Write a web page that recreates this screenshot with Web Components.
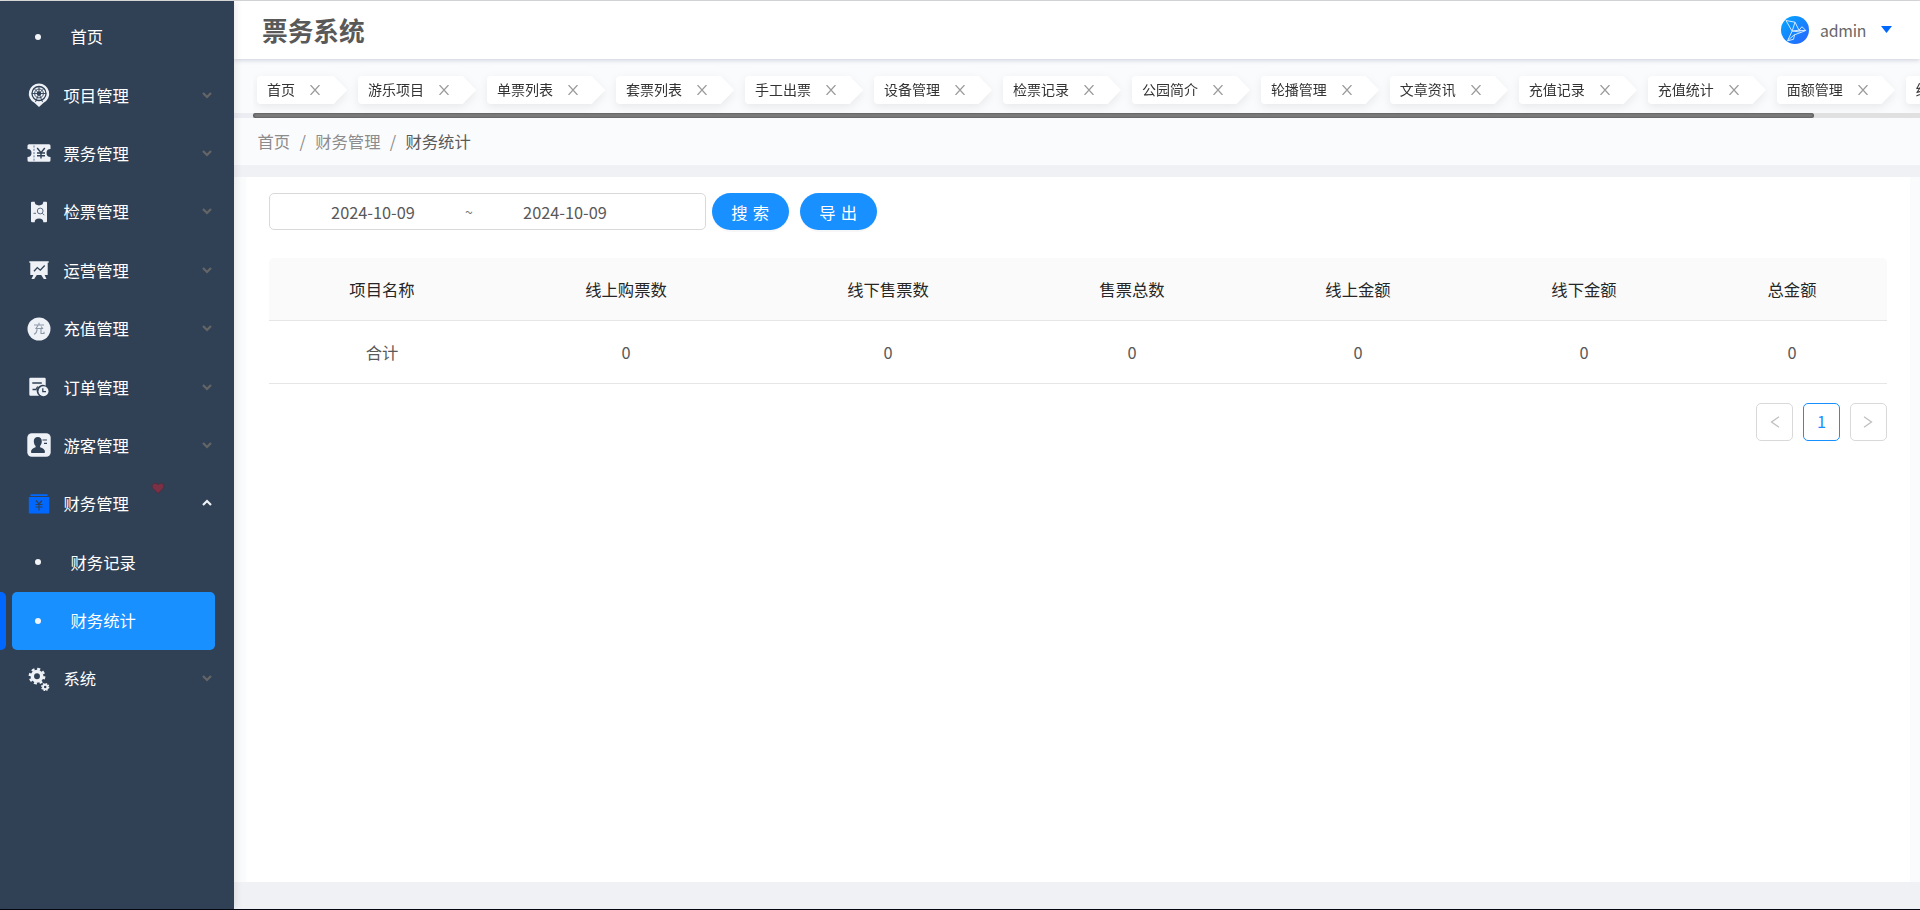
<!DOCTYPE html>
<html lang="zh-CN">
<head>
<meta charset="utf-8">
<title>票务系统</title>
<style>
    html, body {
        margin: 0;
        height: 100%;
        overflow: hidden;
    }
    body {
        font-family: "Noto Sans CJK SC", "Noto Sans", sans-serif;
        font-size: 16.33px;
        color: #595959;
    }
</style>
</head>
<body>
<ticket-app></ticket-app>

<script>
const ICONS = {
    wheel: `<path fill="#eef1f6" d="M12 .5a10.2 10.2 0 0 1 4.6 19.3L12 24l-4.600-4.200A10.200 10.200 0 0 1 12 .5z"/>
        <g fill="none" stroke="#304156" stroke-width="1.300"><circle cx="12" cy="10.500" r="7"/><circle cx="12" cy="10.500" r="4.400" stroke-width=".9"/>
        <path stroke-width=".9" d="M12 3.300v9M4.800 10.500h14.400M7 5.400l5 5.100M17 5.400l-5 5.100M12 10.500L8.500 19M12 10.500l3.500 8.500"/></g><circle cx="12" cy="10.500" r="2.300" fill="#304156"/>`,
    ticket: `<path fill="#eef1f6" d="M2 3.200h20a1.500 1.500 0 0 1 1.500 1.500V8a4 4 0 0 0 0 8v3.300a1.500 1.500 0 0 1-1.500 1.500H2a1.500 1.500 0 0 1-1.500-1.500V16a4 4 0 0 0 0-8V4.700A1.500 1.500 0 0 1 2 3.200z"/>
        <path stroke="#5d79a3" stroke-width="1" stroke-dasharray="2 1.300" d="M7 4.500v15.500"/>
        <path fill="none" stroke="#304156" stroke-width="1.400" d="M10.200 7l3.800 4.700L17.800 7M14 11.500v6M10 12h8M10 14.800h8"/>`,
    check: `<path fill="#eef1f6" d="M5 1.800h2.700a4.300 3.600 0 0 0 8.600 0H19a1 1 0 0 1 1 1v18.400a1 1 0 0 1-1 1h-2.700a4.300 3.600 0 0 0-8.600 0H5a1 1 0 0 1-1-1V2.800a1 1 0 0 1 1-1z"/>
        <g fill="none" stroke="#5c6b82" stroke-width="1"><circle cx="13.200" cy="11" r="2.900"/><path d="M15.300 13.200l2 2M6.500 13.300h2.500"/></g>`,
    board: `<path fill="#eef1f6" d="M2.300 3.300h19.400v1.500h-1V17H3.300V4.800h-1zM6.400 17h3.400l-2.600 4H4.500zM14.200 17h3.400l1.900 4h-2.700z"/>
        <path fill="none" stroke="#304156" stroke-width="1.300" d="M7 13.300l3.300-3.700 3 2.600 4.400-4.700"/>`,
    charge: `<circle cx="12" cy="12" r="11.500" fill="#eef1f6"/>
        <path fill="none" stroke="#8c98a8" stroke-width="1.100" d="M12 5.800v2M7 8h10M11 8.500l-2 3h6.500M14 9.500l2 2.300M10 12c0 3-1 4.500-3 5.200M14 12v4.500h3v-1.800"/>`,
    order: `<path fill="#eef1f6" d="M3.500 2.700h14a1.200 1.200 0 0 1 1.200 1.200v6.800a6 6 0 0 0-6.600 10H3.500a1.200 1.200 0 0 1-1.200-1.200V3.900a1.200 1.200 0 0 1 1.200-1.200z"/>
        <path fill="none" stroke="#304156" stroke-width="1.300" d="M5.300 8h9.500M10.700 11.500l-2 3.500M5.500 14.500h3.200"/>
        <circle cx="16.500" cy="16.300" r="5" fill="#eef1f6"/><path fill="none" stroke="#304156" stroke-width="1.300" d="M15.800 13.300v3.400h3.200"/>`,
    visitor: `<rect x=".3" y=".3" width="23.400" height="23.400" rx="4.500" fill="#eef1f6"/>
        <path fill="#304156" d="M10.800 4c2.700 0 4 1.700 4 4.300 0 2.400-.8 3.600-1.700 4.700v1.300c2.800 1 4.900 2 4.900 4.700 0 .7-.6 1-1.200 1H5.200c-.7 0-1.200-.3-1.200-1 0-2.700 2-3.700 4.600-4.700V13C7.700 12 6.800 10.700 6.800 8.300 6.800 5.700 8.200 4 10.800 4z"/>
        <path stroke="#304156" stroke-width="1.200" d="M15.500 7H20M17 10.300h3"/>`,
    finance: `<path fill="#0068ff" d="M3.500 2.200h17v1.700h-17zM1.800 5h20.400v15.700a.8.8 0 0 1-.8.800H2.600a.8.8 0 0 1-.8-.8z"/>
        <path fill="none" stroke="#304156" stroke-width="1.200" d="M9 8.500l3 3.500 3-3.500M12 12v6.500M8.500 12.500h7M8.500 15h7"/>`,
    gears: `<g fill="none" stroke="#eef1f6"><circle cx="10" cy="9.200" r="4.700" stroke-width="3.500"/><circle cx="10" cy="9.200" r="7.200" stroke-width="2.400" stroke-dasharray="3 2.650"/>
        <circle cx="18.200" cy="20" r="2.200" stroke-width="1.900"/><circle cx="18.200" cy="20" r="3.500" stroke-width="1.300" stroke-dasharray="1.500 1.250"/></g>`
};

function define(name, html, setup) {
    const template = document.createElement("template");
    template.innerHTML = html;
    window.customElements.define(name, class extends HTMLElement {
        constructor() {
            super();
            this.attachShadow({ mode: "open" }).appendChild(template.content.cloneNode(true));
        }
        connectedCallback() {
            if (setup) setup(this, this.shadowRoot);
        }
    });
}

// ---- sidebar ----

define("menu-item", `
    <style>
        :host {
            display: flex;
            position: relative;
            align-items: center;
            height: 58.4px;
            color: #fff;
        }
        .icon { width: 24px; height: 24px; margin: 0 12.500px 1px 27px; flex: none; }
        .icon svg { display: block; width: 24px; height: 24px; }
        .dot { width: 6px; height: 6px; border-radius: 50%; background: #f2f4f7; margin: 0 29.500px 1px 35px; flex: none; }
        .label { flex: 1; line-height: 24px; padding-bottom: 2px; }
        .arrow { width: 10px; height: 8px; margin: 0 22px 2px 0; fill: none; stroke: #656565; stroke-width: 2.200; }
        .heart { position: absolute; left: 152px; top: 7.500px; width: 12px; height: 11px; display: none; overflow: visible; }
        :host([open]) .arrow { stroke: #eef1f6; transform: scaleY(-1); }
        :host([open]) .heart { display: block; }
        :host([active])::before {
            content: "";
            position: absolute;
            left: 0; top: 0; bottom: 0;
            width: 6px;
            background: #0068ff;
            border-radius: 0 5px 5px 0;
        }
        :host([active]) .row { background: #1890ff; border-radius: 5px; margin-left: 12px; margin-right: 19px; }
        :host([active]) .dot { margin-left: 23px; }
        .row { display: flex; flex: 1; align-items: center; height: 58px; }
    </style>
    <div class="row">
        <span class="mark"></span>
        <span class="label"><slot></slot></span>
        <svg class="arrow" viewBox="0 0 10 8"><path d="M1 2l4 4 4-4"/></svg>
    </div>
    <svg class="heart" viewBox="0 0 12 11"><path fill="#7b3045" stroke="#4a2d3e" stroke-width=".8" d="M6 10.500L.9 5.500C-.9 3 .7.300 3.200.300 4.600.300 5.500 1 6 2 6.500 1 7.400.300 8.800.300c2.500 0 4.100 2.700 2.300 5.200z"/></svg>
`, (host, root) => {
    const mark = root.querySelector(".mark");
    const icon = host.getAttribute("icon");
    if (icon) {
        mark.className = "icon";
        mark.innerHTML = `<svg viewBox="0 0 24 24">${ICONS[icon]}</svg>`;
    } else {
        mark.className = "dot";
        root.querySelector(".arrow").remove();
    }
});

define("side-menu", `
    <style>
        :host {
            display: block;
            box-sizing: border-box;
            width: 234px;
            padding-top: 7px;
            background: #304156;
            box-shadow: 2px 0 7px rgba(29, 35, 41, .1);
            z-index: 2;
        }
    </style>
    <slot></slot>
`);

// ---- header ----

define("top-header", `
    <style>
        :host {
            display: flex;
            align-items: center;
            height: 58px;
            padding: 0 28px;
            background: #fff;
            box-shadow: 0 1px 5px rgba(0, 21, 71, .2);
            z-index: 1;
        }
        .title { flex: 1; font-size: 25.700px; font-weight: bold; line-height: 36px; color: #595959; }
        .avatar { width: 28px; height: 28px; margin-bottom: 1px; }
        .name { width: 46px; margin: 0 15px 0 11px; font-size: 15.800px; letter-spacing: -.2px; color: #666; }
        .caret { width: 11px; height: 8px; }
    </style>
    <span class="title"><slot></slot></span>
    <svg class="avatar" viewBox="0 0 28 28">
        <defs><linearGradient id="g" x1="0" y1="0" x2="1" y2="1"><stop offset="0" stop-color="#02aaff"/><stop offset="1" stop-color="#2962ff"/></linearGradient></defs>
        <circle cx="14" cy="14" r="14" fill="url(#g)"/>
        <path fill="none" stroke="#cfe8ff" stroke-width="1" stroke-linejoin="round" d="M5 4.500l9 1.700 4 8-7 .8zM14 6.200L11.200 15M18 14.200l3-3.500 3.800 3.800H18M11.200 15l9.300 1.200 4.300-1.700M20.500 16.200l-7.500 2.800-6.500 5.800 4.700-9.800M6.500 24.800l6-1.500 1-4.500"/>
    </svg>
    <span class="name">admin</span>
    <svg class="caret" viewBox="0 0 11 8"><path fill="#0068ff" d="M0 0h11L5.500 7z"/></svg>
`);

define("page-tab", `
    <style>
        :host {
            display: flex;
            flex: none;
            filter: drop-shadow(0 3px 4px rgba(0, 0, 0, .07));
            height: 28px;
            font-size: 14px;
            color: #333;
        }
        .body { display: flex; align-items: center; padding-left: 10px; background: #fff; border-radius: 4px 0 0 4px; }
        .text { line-height: 22px; padding-bottom: 2px; }
        svg { width: 10px; height: 10px; margin: 0 14px 0 14.700px; fill: none; stroke: #999; stroke-width: 1.200; }
        .tip { width: 13.500px; background: #fff; clip-path: polygon(0 0, 100% 50%, 0 100%); }
    </style>
    <div class="body">
        <span class="text"><slot></slot></span>
        <svg viewBox="0 0 10 10"><path d="M.5 0l9 10M9.500 0l-9 10"/></svg>
    </div>
    <div class="tip"></div>
`);

define("tab-strip", `
    <style>
        :host { display: block; height: 59px; background: #fafbfd; padding-left: 19px; }
        .tabs { display: flex; height: 54px; padding: 17px 0 0 4px; box-sizing: border-box; overflow: hidden; gap: 10.800px; }
        .bar { background: #ebedf2; margin-left: -19px; padding-left: 19px; }
        .track { height: 5px; background: #e0e0e0; }
        .thumb { width: 1561px; height: 5px; box-sizing: border-box; border-radius: 3px; background: #808080; box-shadow: inset 0 0 3px rgba(0, 0, 0, .5); }
    </style>
    <div class="tabs"><slot></slot></div>
    <div class="bar"><div class="track"><div class="thumb"></div></div></div>
`);

define("bread-crumb", `
    <style>
        :host { display: flex; align-items: center; box-sizing: border-box; height: 47px; padding: 0 0 2px 23.500px; background: #fafbfd; color: #8c8c8c; }
        .sep { margin: 0 9.300px; }
        .last { color: #595959; }
    </style>
    <div class="path"></div>
`, (host, root) => {
    const parts = host.getAttribute("path").split(",");
    root.querySelector(".path").innerHTML = parts.map((text, i) =>
        `<span class="${i === parts.length - 1 ? "last" : ""}">${text}</span>`).join(`<span class="sep">/</span>`);
});

// ---- content ----

define("date-range", `
    <style>
        :host {
            display: flex;
            align-items: center;
            box-sizing: border-box;
            width: 437px;
            height: 37px;
            padding: 1px 0 0 12px;
            border: 1px solid #d9d9d9;
            border-radius: 5px;
            color: #595959;
            text-align: center;
        }
        .date { width: 182px; }
        .sep { width: 10px; font-size: 14px; color: #777; }
    </style>
    <span class="date"></span><span class="sep">~</span><span class="date"></span>
`, (host, root) => {
    const dates = root.querySelectorAll(".date");
    dates[0].textContent = host.getAttribute("from");
    dates[1].textContent = host.getAttribute("to");
});

define("round-button", `
    <style>
        :host {
            display: flex;
            align-items: center;
            justify-content: center;
            box-sizing: border-box;
            height: 37px;
            width: 76.500px;
            padding-top: 1px;
            border-radius: 19px;
            background: #1890ff;
            color: #fff;
            box-shadow: 0 2px 0 rgba(0, 0, 0, .03);
            white-space: pre;
            word-spacing: 1.500px;
        }
    </style>
    <slot></slot>
`);

define("data-table", `
    <style>
        :host { display: block; }
        .row {
            display: grid;
            grid-template-columns: 226px 262px 262px 226px 226px 226px 1fr;
            align-items: center;
            box-sizing: border-box;
            height: 63px;
            border-bottom: 1px solid #e6e6e6;
            text-align: center;
        }
        .head { background: #fafafa; color: #262626; border-radius: 5px 5px 0 0; }
    </style>
`, (host, root) => {
    const rows = [host.getAttribute("columns").split(","), host.getAttribute("row").split(",")];
    rows.forEach((cells, i) => {
        const row = document.createElement("div");
        row.className = i === 0 ? "row head" : "row";
        row.innerHTML = cells.map(c => `<span>${c}</span>`).join("");
        root.appendChild(row);
    });
});

define("page-nav", `
    <style>
        :host { display: flex; justify-content: flex-end; gap: 9.300px; }
        .box {
            display: flex;
            align-items: center;
            justify-content: center;
            box-sizing: border-box;
            width: 37.500px;
            height: 38px;
            border: 1px solid #d9d9d9;
            border-radius: 5px;
        }
        .current { border-color: #1890ff; color: #1890ff; padding-bottom: 3px; }
        svg { width: 10px; height: 12px; fill: none; stroke: #bfbfbf; stroke-width: 1.300; }
    </style>
    <div class="box"><svg viewBox="0 0 10 12"><path d="M9 .7L1.500 6 9 11.300"/></svg></div>
    <div class="box current">1</div>
    <div class="box"><svg viewBox="0 0 10 12"><path d="M1 .7L8.500 6 1 11.300"/></svg></div>
`);

define("ticket-app", `
    <style>
        :host {
            display: flex;
            box-sizing: border-box;
            height: 100vh;
            border-top: 1px solid #dedede;
            border-bottom: 1px solid #05070f;
            background: #f0f2f5;
        }
        side-menu { flex: none; }
        main { flex: 1; min-width: 0; display: flex; flex-direction: column; background: #eff1f5; }
        .page { flex: 1; display: flex; margin: 12px 0 27px; padding: 0 10px 0 12px; background: #fafbfd; }
        .panel { flex: 1; background: #fff; padding: 16px 23px 0; }
        .search { display: flex; margin-bottom: 28px; }
        .search round-button { margin-left: 6px; }
        .search round-button + round-button { margin-left: 11.500px; }
        page-nav { margin-top: 19px; }
    </style>
    <side-menu>
        <menu-item>首页</menu-item>
        <menu-item icon="wheel">项目管理</menu-item>
        <menu-item icon="ticket">票务管理</menu-item>
        <menu-item icon="check">检票管理</menu-item>
        <menu-item icon="board">运营管理</menu-item>
        <menu-item icon="charge">充值管理</menu-item>
        <menu-item icon="order">订单管理</menu-item>
        <menu-item icon="visitor">游客管理</menu-item>
        <menu-item icon="finance" open>财务管理</menu-item>
        <menu-item>财务记录</menu-item>
        <menu-item active>财务统计</menu-item>
        <menu-item icon="gears">系统</menu-item>
    </side-menu>
    <main>
        <top-header>票务系统</top-header>
        <tab-strip>
            <page-tab>首页</page-tab>
            <page-tab>游乐项目</page-tab>
            <page-tab>单票列表</page-tab>
            <page-tab>套票列表</page-tab>
            <page-tab>手工出票</page-tab>
            <page-tab>设备管理</page-tab>
            <page-tab>检票记录</page-tab>
            <page-tab>公园简介</page-tab>
            <page-tab>轮播管理</page-tab>
            <page-tab>文章资讯</page-tab>
            <page-tab>充值记录</page-tab>
            <page-tab>充值统计</page-tab>
            <page-tab>面额管理</page-tab>
            <page-tab>统计</page-tab>
        </tab-strip>
        <bread-crumb path="首页,财务管理,财务统计"></bread-crumb>
        <div class="page">
            <div class="panel">
                <div class="search">
                    <date-range from="2024-10-09" to="2024-10-09"></date-range>
                    <round-button>搜 索</round-button>
                    <round-button>导 出</round-button>
                </div>
                <data-table columns="项目名称,线上购票数,线下售票数,售票总数,线上金额,线下金额,总金额" row="合计,0,0,0,0,0,0"></data-table>
                <page-nav></page-nav>
            </div>
        </div>
    </main>
`);
</script>
</body>
</html>
